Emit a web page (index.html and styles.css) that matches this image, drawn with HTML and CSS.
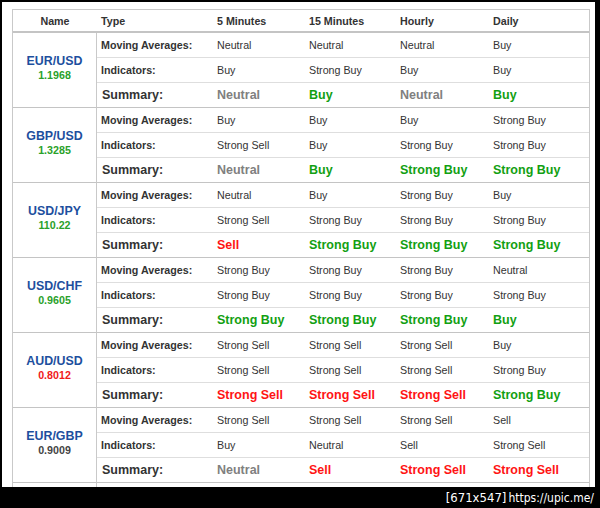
FILE: index.html
```html
<!DOCTYPE html>
<html>
<head>
<meta charset="utf-8">
<link rel="stylesheet" href="styles.css">
</head>
<body>
<div class="frame">
<table class="tech">
<colgroup>
<col class="c-name"><col class="c-type"><col class="c-5"><col class="c-15"><col class="c-h"><col class="c-d">
</colgroup>
<thead>
<tr><th class="hname">Name</th><th>Type</th><th>5 Minutes</th><th>15 Minutes</th><th>Hourly</th><th>Daily</th></tr>
</thead>
<tbody>
<tr><td class="pair" rowspan="3"><div class="sym">EUR/USD</div><div class="px up">1.1968</div></td><td class="type">Moving Averages:</td><td>Neutral</td><td>Neutral</td><td>Neutral</td><td>Buy</td></tr>
<tr><td class="type">Indicators:</td><td>Buy</td><td>Strong Buy</td><td>Buy</td><td>Buy</td></tr>
<tr class="sum"><td class="type">Summary:</td><td class="n">Neutral</td><td class="b">Buy</td><td class="n">Neutral</td><td class="b">Buy</td></tr>

<tr><td class="pair" rowspan="3"><div class="sym">GBP/USD</div><div class="px up">1.3285</div></td><td class="type">Moving Averages:</td><td>Buy</td><td>Buy</td><td>Buy</td><td>Strong Buy</td></tr>
<tr><td class="type">Indicators:</td><td>Strong Sell</td><td>Buy</td><td>Strong Buy</td><td>Strong Buy</td></tr>
<tr class="sum"><td class="type">Summary:</td><td class="n">Neutral</td><td class="b">Buy</td><td class="b">Strong Buy</td><td class="b">Strong Buy</td></tr>

<tr><td class="pair" rowspan="3"><div class="sym">USD/JPY</div><div class="px up">110.22</div></td><td class="type">Moving Averages:</td><td>Neutral</td><td>Buy</td><td>Strong Buy</td><td>Buy</td></tr>
<tr><td class="type">Indicators:</td><td>Strong Sell</td><td>Strong Buy</td><td>Strong Buy</td><td>Strong Buy</td></tr>
<tr class="sum"><td class="type">Summary:</td><td class="s">Sell</td><td class="b">Strong Buy</td><td class="b">Strong Buy</td><td class="b">Strong Buy</td></tr>

<tr><td class="pair" rowspan="3"><div class="sym">USD/CHF</div><div class="px up">0.9605</div></td><td class="type">Moving Averages:</td><td>Strong Buy</td><td>Strong Buy</td><td>Strong Buy</td><td>Neutral</td></tr>
<tr><td class="type">Indicators:</td><td>Strong Buy</td><td>Strong Buy</td><td>Strong Buy</td><td>Strong Buy</td></tr>
<tr class="sum"><td class="type">Summary:</td><td class="b">Strong Buy</td><td class="b">Strong Buy</td><td class="b">Strong Buy</td><td class="b">Buy</td></tr>

<tr><td class="pair" rowspan="3"><div class="sym">AUD/USD</div><div class="px down">0.8012</div></td><td class="type">Moving Averages:</td><td>Strong Sell</td><td>Strong Sell</td><td>Strong Sell</td><td>Buy</td></tr>
<tr><td class="type">Indicators:</td><td>Strong Sell</td><td>Strong Sell</td><td>Strong Sell</td><td>Strong Buy</td></tr>
<tr class="sum"><td class="type">Summary:</td><td class="s">Strong Sell</td><td class="s">Strong Sell</td><td class="s">Strong Sell</td><td class="b">Strong Buy</td></tr>

<tr><td class="pair" rowspan="3"><div class="sym">EUR/GBP</div><div class="px flat">0.9009</div></td><td class="type">Moving Averages:</td><td>Strong Sell</td><td>Strong Sell</td><td>Strong Sell</td><td>Sell</td></tr>
<tr><td class="type">Indicators:</td><td>Buy</td><td>Neutral</td><td>Sell</td><td>Strong Sell</td></tr>
<tr class="sum"><td class="type">Summary:</td><td class="n">Neutral</td><td class="s">Sell</td><td class="s">Strong Sell</td><td class="s">Strong Sell</td></tr>

<tr><td class="pair" rowspan="3"><div class="sym">&nbsp;</div></td><td class="type">&nbsp;</td><td></td><td></td><td></td><td></td></tr>
</tbody>
</table>
</div>
<div class="footer"><span class="wm">[671x547]</span><span class="wm-url">https://upic.me/</span></div>
</body>
</html>
```

FILE: styles.css
```css
html, body {
  margin: 0;
  padding: 0;
}
body {
  width: 600px;
  height: 508px;
  overflow: hidden;
  background: #000;
  font-family: "Liberation Sans", Arial, sans-serif;
}
.frame {
  box-sizing: border-box;
  margin: 2px 0 0 2px;
  width: 593px;
  height: 485px;
  background: #fff;
  overflow: hidden;
  padding: 7px 0 0 10px;
}
.tech {
  width: 578px;
  table-layout: fixed;
  border-collapse: separate;
  border-spacing: 0;
  border: 1px solid #c9c9c9;
  font-size: 10.7px;
  color: #333;
}
.c-name { width: 84px; }
.c-type { width: 116px; }
.c-5 { width: 92px; }
.c-15 { width: 91px; }
.c-h { width: 93px; }
.c-d { width: 100px; }

.tech th {
  height: 21px;
  padding: 0 0 0 4px;
  text-align: left;
  font-weight: bold;
  color: #333;
  border-bottom: 2px solid #c4c4c4;
  vertical-align: middle;
}
.tech th.hname {
  text-align: center;
  padding: 0;
}
.tech td {
  height: 24px;
  padding: 0 0 0 4px;
  border-bottom: 1px solid #dedede;
  vertical-align: middle;
  white-space: nowrap;
}
.tech td.type {
  font-weight: bold;
}
.tech tr.sum td {
  border-bottom: 1px solid #c4c4c4;
  font-weight: bold;
  font-size: 12.5px;
}
.tech tr.sum td.type {
  color: #333;
  padding-left: 5px;
}
.tech td.pair {
  padding: 0 0 4px 0;
  text-align: center;
  border-right: 1px solid #c9c9c9;
  border-bottom: 1px solid #c4c4c4;
}
.sym {
  font-size: 12.4px;
  font-weight: bold;
  color: #1d4f9e;
  line-height: 14px;
}
.px {
  font-size: 10.7px;
  font-weight: bold;
  line-height: 14px;
}
.px.up { color: #2aa12a; }
.px.down { color: #f01a1a; }
.px.flat { color: #444; }
.tech tr.sum td.n { color: #808080; }
.tech tr.sum td.b { color: #12a012; }
.tech tr.sum td.s { color: #ff1414; }

.footer {
  height: 21px;
  padding-right: 6px;
  text-align: right;
  color: #fff;
  font-size: 13px;
  line-height: 21px;
  font-family: "DejaVu Sans Condensed", "DejaVu Sans", sans-serif;
}
.wm { margin-right: 2px; }
.wm-url { font-size: 12px; }
```
